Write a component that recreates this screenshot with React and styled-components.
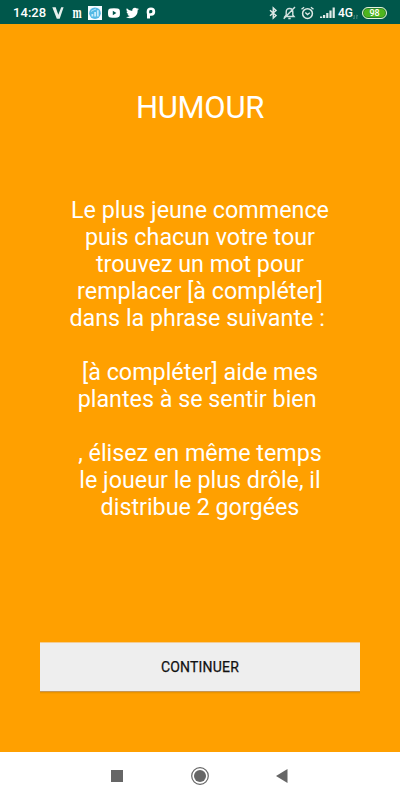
import React from "react";
import styled, { createGlobalStyle } from "styled-components";

const GlobalStyle = createGlobalStyle`
  body { margin: 0; background: #ffa000; }
  * { box-sizing: border-box; }
`;

const Screen = styled.div`
  display: flex;
  flex-direction: column;
  width: 400px;
  height: 800px;
  background: #ffa000;
  font-family: Roboto, sans-serif;
`;

const StatusBar = styled.header`
  display: flex;
  justify-content: space-between;
  height: 24px;
  padding: 0 13px;
  background: #00574b;
  color: #fff;
`;

const StatusGroup = styled.div`
  display: flex;
  align-items: center;
  height: 25px;
`;

const Clock = styled.span`
  width: 39px;
  font-size: 13px;
  font-weight: 500;
  line-height: 16px;
  letter-spacing: 0.05px;
  white-space: nowrap;
`;

const StatusIcon = styled.svg`
  display: block;
  flex: none;
  width: ${(p) => p.$w}px;
  height: ${(p) => p.$h || 14}px;
  margin-left: ${(p) => p.$gap || 0}px;
`;

const MonogramIcon = styled.span`
  width: 12px;
  margin-left: 7px;
  font: 700 11px/14px "Liberation Serif", serif;
  text-align: center;
  transform: translateY(-1px) scaleY(1.45);
`;

const Network = styled.span`
  width: 15px;
  margin-left: 3px;
  font-size: 12px;
  font-weight: 500;
  line-height: 14px;
`;

const Battery = styled.span`
  display: flex;
  align-items: center;
  justify-content: center;
  width: 25px;
  height: 12px;
  margin-left: 4px;
  border: 1px solid #e5f2dc;
  border-radius: 6px;
  background: #4fb51d;
  box-shadow: inset 0 0 0 1px #2b8130;
  font-size: 9px;
  font-weight: 500;
  line-height: 10px;
`;

const Card = styled.main`
  display: flex;
  flex: 1;
  flex-direction: column;
  align-items: center;
  padding: 65px 40px 0;
  color: #fff;
`;

const Title = styled.h1`
  margin: 0;
  font-size: 31px;
  font-weight: 400;
  line-height: 38px;
  letter-spacing: -0.3px;
`;

const Instructions = styled.p`
  height: 445px;
  margin: 70px 0 0;
  font-size: 23.3px;
  line-height: 27px;
  text-align: center;
  white-space: pre;
`;

const Line = styled.span`
  display: block;
  height: 27px;
`;

const ContinueButton = styled.button`
  width: 320px;
  height: 49px;
  padding: 0 0 1px;
  border: 0;
  border-top: 1px solid #f5cc90;
  background: #eee;
  color: #111;
  font: 400 14px/18px Roboto, sans-serif;
  letter-spacing: 0.2px;
  -webkit-text-stroke: 0.25px #111;
  box-shadow: 0 1px 0 #c69655, 0 2px 0 #e99300, 0 3px 0 #f79c00;
`;

const NavigationBar = styled.nav`
  display: grid;
  grid-template-columns: 12px 18px 12px;
  justify-content: center;
  align-items: center;
  column-gap: 68px;
  height: 48px;
  background: #fff;
`;

const NavIcon = styled.svg`
  display: block;
  width: 100%;
  height: 18px;
  overflow: visible;
  transform: translateX(${(p) => p.$shift || 0}px);
`;

const lines = [
  "Le plus jeune commence",
  "puis chacun votre tour",
  "trouvez un mot pour",
  "remplacer [à compléter]",
  "dans la phrase suivante : ",
  "",
  "[à compléter] aide mes",
  "plantes à se sentir bien ",
  "",
  ", élisez en même temps",
  "le joueur le plus drôle, il",
  "distribue 2 gorgées",
];

function Notifications() {
  return (
    <StatusGroup>
      <Clock>14:28</Clock>
      <StatusIcon $w={12} viewBox="0 0 12 14">
        <path d="M0.3 1.3h3.4l2.6 7.5 2.9-7.5h2.4L7.7 12.8H4.8z" fill="#e5efec" />
      </StatusIcon>
      <MonogramIcon>m</MonogramIcon>
      <StatusIcon $w={14} $gap={5} viewBox="0 0 14 14">
        <path d="M0 0h14v14H0z" fill="#f5fbff" />
        <circle cx="7" cy="7.2" r="5.8" fill="#53b9e5" />
        <path d="M3.5 8h1.8v2.5H3.5zM6.2 6H8v4.5H6.2zM8.9 4.3h1.8v6.2H8.9z" fill="#c8ebfa" />
        <path d="M3 5.4l3-1.6 2-.8" stroke="#b4e4f8" fill="none" />
      </StatusIcon>
      <StatusIcon $w={12} $gap={6} viewBox="0 0 12 14">
        <path d="M2.5 2.4Q6 2 9.5 2.4q2.1.1 2.3 2 .3 2.6 0 5.2-.2 1.7-2.3 2Q6 12 2.5 11.6.4 11.4.2 9.6q-.4-2.6 0-5.2.2-1.8 2.3-2zM4.8 4.8v4.4L8.4 7z" fill="#fff" fillRule="evenodd" />
      </StatusIcon>
      <StatusIcon $w={13} $h={14} $gap={6} viewBox="0 0 24 24">
        <path d="M23.9 4.6a10 10 0 0 1-2.8.8 5 5 0 0 0 2.1-2.7 10 10 0 0 1-3.1 1.2 4.9 4.9 0 0 0-8.4 4.5A14 14 0 0 1 1.6 3.2a4.9 4.9 0 0 0 1.5 6.5 5 5 0 0 1-2.2-.6 4.9 4.9 0 0 0 4 4.9 5 5 0 0 1-2.3.1 4.9 4.9 0 0 0 4.6 3.4A9.9 9.9 0 0 1 0 19.5a14 14 0 0 0 21.5-12.4 10 10 0 0 0 2.4-2.5z" fill="#fff" />
      </StatusIcon>
      <StatusIcon $w={10} $gap={7} viewBox="0 0 10 14">
        <path d="M1 12.5h3V9.8h1.2C8.2 9.8 9.2 8 9.2 5.6 9.2 3 7.7 1.5 5 1.5 2.3 1.5.7 3 .7 5.4v2.1h2.5V5.4c0-.8.6-1.3 1.6-1.3s1.6.5 1.6 1.4-.5 1.7-1.6 1.7H1z" fill="#fff" />
      </StatusIcon>
    </StatusGroup>
  );
}

function DeviceStatus() {
  return (
    <StatusGroup>
      <StatusIcon $w={9} viewBox="0 0 9 14">
        <path d="M1 4.2l6 5.3L4.3 12V2L7 4.5 1 9.8" fill="none" stroke="#dbe8e5" strokeWidth="1.5" />
      </StatusIcon>
      <StatusIcon $w={13} $gap={5} viewBox="0 0 13 14">
        <path d="M2 10.5h9L9.8 9V6q0-3.5-3.3-3.5T3.2 6v3zM5.3 12.5h2.4M.7 12.8L12 1" fill="none" stroke="#d3e2df" strokeWidth="1.4" />
      </StatusIcon>
      <StatusIcon $w={13} $gap={5} viewBox="0 0 13 14">
        <circle cx="6.5" cy="7.6" r="4.9" fill="none" stroke="#dce9e5" strokeWidth="1.5" />
        <path d="M.5 3.3l2.6-2M12.5 3.3l-2.6-2M4.3 6.5l2.2 2 2.3-1.8" fill="none" stroke="#dce9e5" strokeWidth="1.4" />
      </StatusIcon>
      <StatusIcon $w={15} $gap={6} viewBox="0 0 15 14">
        <path d="M0 10.5h2.2V12H0zM3 9h2.2v3H3zM6.2 7h2.2v5H6.2zM9.4 4.5h2.2V12H9.4zM12.6 1.5h2.2V12h-2.2z" fill="#e0ebe8" />
      </StatusIcon>
      <Network>4G</Network>
      <StatusIcon $w={5} $gap={0} viewBox="0 0 5 14">
        <path d="M1.2 9v4M0 11.8l1.2 1.2M3.8 13V9M5 10.2L3.8 9" fill="none" stroke="#5e938a" strokeWidth=".8" />
      </StatusIcon>
      <Battery>98</Battery>
    </StatusGroup>
  );
}

export default function App() {
  return (
    <>
      <GlobalStyle />
      <Screen>
        <StatusBar>
          <Notifications />
          <DeviceStatus />
        </StatusBar>
        <Card>
          <Title>HUMOUR</Title>
          <Instructions>
            {lines.map((line, index) => (
              <Line key={index}>{line}</Line>
            ))}
          </Instructions>
          <ContinueButton>CONTINUER</ContinueButton>
        </Card>
        <NavigationBar>
          <NavIcon viewBox="0 0 12 18">
            <path d="M0 3h12v12H0z" fill="#666" />
          </NavIcon>
          <NavIcon viewBox="0 0 18 18">
            <circle cx="9" cy="9" r="8.3" fill="none" stroke="#666" strokeWidth="1.2" />
            <circle cx="9" cy="9" r="6" fill="#666" />
          </NavIcon>
          <NavIcon $shift={-1.5} viewBox="0 0 12 18">
            <path d="M12 2v14L.5 9z" fill="#666" />
          </NavIcon>
        </NavigationBar>
      </Screen>
    </>
  );
}
